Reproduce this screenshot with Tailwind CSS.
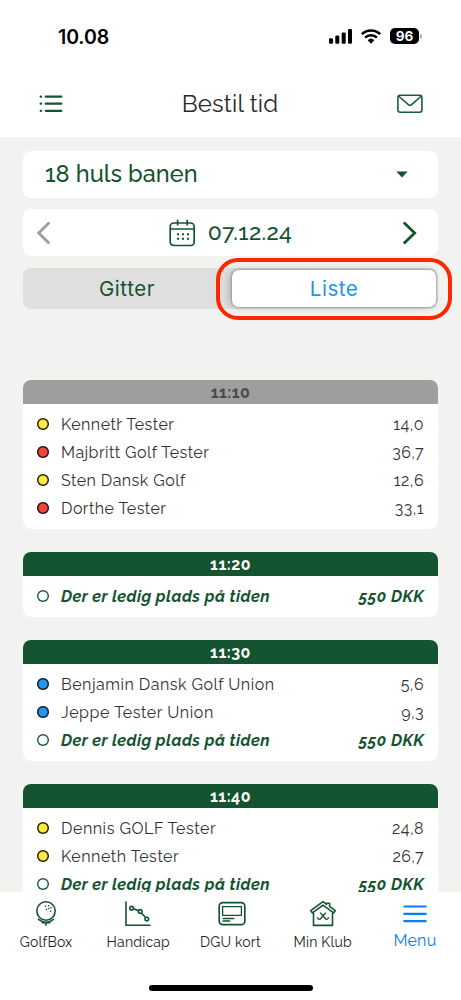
<!DOCTYPE html>
<html lang="da">
<head>
<meta charset="utf-8">
<title>Bestil tid</title>
<script src="https://cdn.jsdelivr.net/npm/@tailwindcss/browser@4"></script>
</head>
<body class="w-[461px] h-[1000px] overflow-hidden bg-[#f2f2f1] font-['Raleway','Lato','Open_Sans',sans-serif] oldstyle-nums text-[#333] flex flex-col">
<header class="h-[137px] shrink-0 bg-white">
  <div class="h-[72px] flex items-center justify-between pl-[58px] pr-[39px]">
    <span class="pt-[3px] font-['Inter',sans-serif] font-semibold text-[19.5px] text-black lining-nums tracking-[-0.1px]">10.08</span>
    <div class="flex items-center gap-[9px]">
      <svg width="23" height="15" viewBox="0 0 23 15"><rect x="0" y="9.3" width="4" height="5.4" rx="1.2"/><rect x="6.3" y="6.6" width="4" height="8.1" rx="1.2"/><rect x="12.7" y="3.4" width="4" height="11.3" rx="1.2"/><rect x="19" y="0" width="4" height="14.7" rx="1.2"/></svg>
      <svg width="20" height="15" viewBox="0 0 20 15" fill="none" stroke="#000" stroke-width="2.5"><path d="M.8 5.2a13.2 13.2 0 0 1 18.4 0"/><path d="M4.1 8.7a8.5 8.5 0 0 1 11.8 0"/><path d="M6.6 11.2a5 5 0 0 1 6.8 0L10 14.8z" fill="#000" stroke="none"/></svg>
      <div class="flex items-center gap-px">
        <span class="w-[29px] h-4 rounded-[5px] bg-black text-white font-['Inter',sans-serif] font-bold text-[13.5px] leading-4 text-center lining-nums">96</span>
        <span class="w-[2px] h-[5px] rounded-r bg-[#aaa]"></span>
      </div>
    </div>
  </div>
  <div class="h-[64px] flex items-center justify-between pl-[39px] pr-[38px]">
    <svg width="24" height="18" viewBox="0 0 24 18" stroke="#14532f" stroke-width="2.3" stroke-linecap="round"><path d="M6.8 1.7h15.5M6.8 8.7h15.5M6.8 15.8h15.5M1.7 1.7h.4M1.7 8.7h.4M1.7 15.8h.4"/></svg>
    <h1 class="text-[24px] tracking-[0.15px] text-[#292a26]">Bestil tid</h1>
    <svg width="26" height="20" viewBox="0 0 26 20" fill="none" stroke="#1c5c38" stroke-width="1.6"><rect x=".9" y="1.3" width="24" height="17" rx="2.2"/><path d="M1.5 2l9.8 8.6q1.7 1.3 3.3 0L24.4 2"/></svg>
  </div>
</header>

<main class="flex-1 min-h-0 overflow-hidden px-[23px] pt-[14px]">
  <div class="h-[47px] rounded-lg bg-white flex items-center justify-between pl-[22px] pr-[30px] text-[#14532f]">
    <span class="pb-[2px] text-[23.5px] font-medium tracking-[0.05px]">18 huls banen</span>
    <svg width="12" height="7" viewBox="0 0 12 7" fill="#14532f"><path d="M.3.5h11.4L6 6.5z"/></svg>
  </div>
  <div class="mt-[11px] h-[47px] rounded-lg bg-white flex items-center justify-between pl-[14px] pr-[21px] text-[#14532f]">
    <svg width="14" height="24" viewBox="0 0 14 24" fill="none" stroke="#9e9e9e" stroke-width="2.8"><path d="M12.3 1.5L1.8 12l10.5 10.5"/></svg>
    <div class="flex items-center gap-[12px] pl-2">
      <svg width="27" height="28" viewBox="0 0 27 28" fill="none" stroke="#14532f" stroke-width="1.7"><rect x="1.2" y="4" width="24" height="22.5" rx="3.5"/><path d="M1.2 10h24M8.6.8v5.7M18.2.8v5.7"/><path stroke-width="2" stroke-dasharray="2 3" d="M8 15.2h12M8 19.8h12"/></svg>
      <span class="text-[23px] font-medium tracking-[0.3px]">07.12.24</span>
    </div>
    <svg width="15" height="24" viewBox="0 0 15 24" fill="none" stroke="#14532f" stroke-width="2.8"><path d="M1.8 1.5L12.7 12 1.8 22.5"/></svg>
  </div>
  <div class="relative mt-[12px] h-[41px] rounded-lg bg-[#dfdfdf] flex items-center pr-[2px] font-['Inter',sans-serif] text-[20.5px]">
    <span class="w-[208px] pt-[2px] text-center text-[#14532f] tracking-[0.6px]">Gitter</span>
    <span class="ml-px w-[204px] h-[37px] rounded-[7px] bg-white shadow-[-3px_0_8px_rgba(0,0,0,0.2),0_0_2px_1px_rgba(0,0,0,0.2)] text-center leading-[38px] text-[#2094f3] tracking-[0.5px]">Liste</span>
    <span class="absolute left-[193px] top-[-10px] w-[236px] h-[62px] rounded-[22px] border-4 border-[#ff2600]"></span>
  </div>

  <div class="mt-[71px] flex flex-col gap-[23px] text-[16px] tracking-[0.45px]">
    <section class="rounded-lg overflow-hidden bg-white pb-[7px]">
      <h2 class="h-[24px] mb-[6px] bg-[#9e9e9e] text-[#4a4a4a] text-center font-bold leading-[25px]">11:10</h2>
      <div class="h-7 flex items-center px-[14px]"><i class="size-[12px] rounded-full shadow-[inset_0_0_0_1.5px_#222] bg-[#ffeb3b] mr-3"></i><span class="flex-1 pt-px">Kennet<span class="inline-block overflow-hidden w-[6px] align-bottom">h</span> Tester</span><span class="pt-px">14,0</span></div>
      <div class="h-7 flex items-center px-[14px]"><i class="size-[12px] rounded-full shadow-[inset_0_0_0_1.5px_#222] bg-[#f44336] mr-3"></i><span class="flex-1 pt-px">Majbritt Golf Tester</span><span class="pt-px">36,7</span></div>
      <div class="h-7 flex items-center px-[14px]"><i class="size-[12px] rounded-full shadow-[inset_0_0_0_1.5px_#222] bg-[#ffeb3b] mr-3"></i><span class="flex-1 pt-px">Sten Dansk Golf</span><span class="pt-px">12,6</span></div>
      <div class="h-7 flex items-center px-[14px]"><i class="size-[12px] rounded-full shadow-[inset_0_0_0_1.5px_#222] bg-[#f44336] mr-3"></i><span class="flex-1 pt-px">Dorthe Tester</span><span class="pt-px">33,1</span></div>
    </section>
    <section class="rounded-lg overflow-hidden bg-white pb-[7px]">
      <h2 class="h-[24px] mb-[6px] bg-[#14532f] text-white text-center font-bold leading-[25px]">11:20</h2>
      <div class="h-7 flex items-center px-[14px] text-[#14532f] font-bold italic"><i class="size-[12px] rounded-full shadow-[inset_0_0_0_1.4px_#1c5c38] mr-3"></i><span class="flex-1 pt-px">Der er ledig plads på tiden</span><span class="pt-px">550 DKK</span></div>
    </section>
    <section class="rounded-lg overflow-hidden bg-white pb-[7px]">
      <h2 class="h-[24px] mb-[6px] bg-[#14532f] text-white text-center font-bold leading-[25px]">11:30</h2>
      <div class="h-7 flex items-center px-[14px]"><i class="size-[12px] rounded-full shadow-[inset_0_0_0_1.5px_#222] bg-[#2196f3] mr-3"></i><span class="flex-1 pt-px tracking-[0.5px]">Benjamin Dansk Golf Union</span><span class="pt-px">5,6</span></div>
      <div class="h-7 flex items-center px-[14px]"><i class="size-[12px] rounded-full shadow-[inset_0_0_0_1.5px_#222] bg-[#2196f3] mr-3"></i><span class="flex-1 pt-px tracking-[0.58px]">Jeppe Tester Union</span><span class="pt-px">9,3</span></div>
      <div class="h-7 flex items-center px-[14px] text-[#14532f] font-bold italic"><i class="size-[12px] rounded-full shadow-[inset_0_0_0_1.4px_#1c5c38] mr-3"></i><span class="flex-1 pt-px">Der er ledig plads på tiden</span><span class="pt-px">550 DKK</span></div>
    </section>
    <section class="rounded-lg overflow-hidden bg-white pb-[7px]">
      <h2 class="h-[24px] mb-[6px] bg-[#14532f] text-white text-center font-bold leading-[25px]">11:40</h2>
      <div class="h-7 flex items-center px-[14px]"><i class="size-[12px] rounded-full shadow-[inset_0_0_0_1.5px_#222] bg-[#ffeb3b] mr-3"></i><span class="flex-1 pt-px tracking-[0.53px]">Dennis GOLF Tester</span><span class="pt-px">24,8</span></div>
      <div class="h-7 flex items-center px-[14px]"><i class="size-[12px] rounded-full shadow-[inset_0_0_0_1.5px_#222] bg-[#ffeb3b] mr-3"></i><span class="flex-1 pt-px tracking-[0.53px]">Kenneth Tester</span><span class="pt-px">26,7</span></div>
      <div class="h-7 flex items-center px-[14px] text-[#14532f] font-bold italic"><i class="size-[12px] rounded-full shadow-[inset_0_0_0_1.4px_#1c5c38] mr-3"></i><span class="flex-1 pt-px">Der er ledig plads på tiden</span><span class="pt-px">550 DKK</span></div>
    </section>
  </div>
</main>

<nav class="h-[108px] shrink-0 bg-white flex flex-col items-center justify-between pb-[9px]">
  <div class="w-full grid grid-cols-5 pt-[8px] text-[14px] text-[#222] tracking-[0.2px]">
    <div class="flex flex-col items-center gap-1">
      <svg width="28" height="28" viewBox="0 0 28 28" fill="none" stroke="#14532f" stroke-width="1.6"><circle cx="14" cy="11" r="9.2"/><path d="M6 19.2q8 6.2 16 0M9.5 22.6h9M14 22v3.7" /><path stroke-width="1.5" stroke-linecap="round" d="M13.4 6.3h.1M16.6 5.8h.1M14.4 9.3h.1M16.8 8.5h.1M19 7.8h.1M18.5 11.2h.1"/></svg>
      <span class="leading-5">GolfBox</span>
    </div>
    <div class="flex flex-col items-center gap-1">
      <svg width="28" height="28" viewBox="0 0 28 28" fill="none" stroke="#14532f" stroke-width="1.6"><path d="M2 1.5v23.7h24.5M9.5 8.8l4.8 1.9M17.4 13.1l4.5 4.6"/><circle cx="7.6" cy="8.2" r="1.8"/><circle cx="16.2" cy="11.4" r="1.8"/><circle cx="22.8" cy="19" r="1.8"/></svg>
      <span class="leading-5">Handicap</span>
    </div>
    <div class="flex flex-col items-center gap-1 pl-1">
      <svg width="28" height="28" viewBox="0 0 28 28" fill="none" stroke="#14532f" stroke-width="1.7"><rect x="1.2" y="2.7" width="25.6" height="22" rx="3.5"/><path stroke-width="1.3" d="M4.6 6.6h18.8v8.7H4.6zM4.6 18.5h11.8M4.6 21h7.5"/></svg>
      <span class="leading-5 -ml-1">DGU kort</span>
    </div>
    <div class="flex flex-col items-center gap-1">
      <svg width="28" height="28" viewBox="0 0 28 28" fill="none" stroke="#14532f" stroke-width="1.6" stroke-linejoin="round"><path d="M4.5 13v12.4h19V13M14 1.7l3.6 2.6V3.2h3v3.2l5.7 4.2-1.7 2.3L14 5.2 3.4 12.9l-1.7-2.3z"/><path stroke-width="1.3" d="M11.2 12.7l5.8 6.6q1.8.6 2.6-2M16.8 12.7l-5.8 6.6q-1.8.6-2.6-2"/></svg>
      <span class="leading-5">Min Klub</span>
    </div>
    <div class="flex flex-col items-center gap-px text-[#087cff]">
      <svg width="24" height="28" viewBox="0 0 24 28" stroke="#087cff" stroke-width="2.2"><path d="M.5 6.5h23M.5 13.9h23M.5 21.2h23"/></svg>
      <span class="text-[16px] leading-6">Menu</span>
    </div>
  </div>
  <div class="w-[164px] h-[6px] rounded-full bg-black"></div>
</nav>
</body>
</html>
